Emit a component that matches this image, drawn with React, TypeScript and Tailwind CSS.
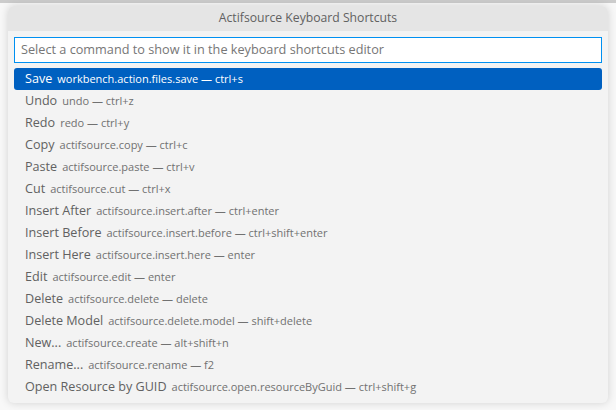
const commands: { label: string; id: string; key: string }[] = [
  { label: "Save", id: "workbench.action.files.save", key: "ctrl+s" },
  { label: "Undo", id: "undo", key: "ctrl+z" },
  { label: "Redo", id: "redo", key: "ctrl+y" },
  { label: "Copy", id: "actifsource.copy", key: "ctrl+c" },
  { label: "Paste", id: "actifsource.paste", key: "ctrl+v" },
  { label: "Cut", id: "actifsource.cut", key: "ctrl+x" },
  { label: "Insert After", id: "actifsource.insert.after", key: "ctrl+enter" },
  { label: "Insert Before", id: "actifsource.insert.before", key: "ctrl+shift+enter" },
  { label: "Insert Here", id: "actifsource.insert.here", key: "enter" },
  { label: "Edit", id: "actifsource.edit", key: "enter" },
  { label: "Delete", id: "actifsource.delete", key: "delete" },
  { label: "Delete Model", id: "actifsource.delete.model", key: "shift+delete" },
  { label: "New...", id: "actifsource.create", key: "alt+shift+n" },
  { label: "Rename...", id: "actifsource.rename", key: "f2" },
  { label: "Open Resource by GUID", id: "actifsource.open.resourceByGuid", key: "ctrl+shift+g" },
]

export default function App() {
  return (
    <div className="w-[616px] h-[410px] overflow-hidden bg-[#f8f8f8] font-['Segoe_UI','Open_Sans',sans-serif] flex flex-col">
      <div className="h-[3px] bg-[#cccccc]" />
      <div className="flex-1 pl-[8px] pt-[3px]">
        <div className="w-[600px] h-[397px] bg-[#f3f3f3] rounded-[6px] shadow-[0_0_8px_rgba(0,0,0,0.16)] overflow-hidden flex flex-col">
          <div className="h-[25px] bg-[#e5e5e5] flex items-center justify-center text-[12.2px] text-[#616161]">
            Actifsource Keyboard Shortcuts
          </div>
          <div className="px-[6px] pt-[6px]">
            <div className="h-[26px] border border-[#0090f1] bg-white flex items-center px-[6px] text-[12.7px] text-[#767676]">
              Select a command to show it in the keyboard shortcuts editor
            </div>
          </div>
          <div className="px-[6px] pt-[5px] flex flex-col">
            {commands.map((c, i) => (
              <div
                key={c.id}
                className={
                  i === 0
                    ? "h-[22px] rounded-[3px] bg-[#0060c0] text-white flex items-center pl-[11px] whitespace-nowrap"
                    : "h-[22px] rounded-[3px] text-[#616161] flex items-center pl-[11px] whitespace-nowrap"
                }
              >
                <span className="text-[12.6px]">{c.label}</span>
                <span className={i === 0 ? "ml-[5px] text-[11px] text-white" : "ml-[5px] text-[11px] text-[#717171]"}>
                  {c.id} — {c.key}
                </span>
              </div>
            ))}
          </div>
        </div>
      </div>
    </div>
  )
}
